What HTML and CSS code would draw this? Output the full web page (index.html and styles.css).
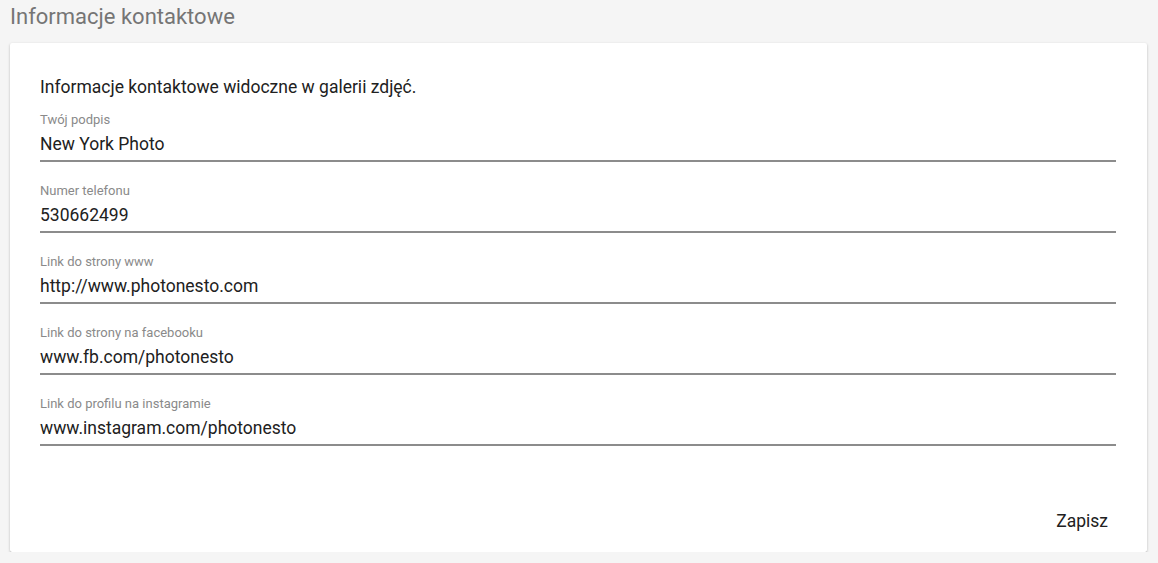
FILE: index.html
```html
<!DOCTYPE html>
<html lang="pl">
<head>
<meta charset="utf-8">
<title>Informacje kontaktowe</title>
<link rel="stylesheet" href="styles.css">
</head>
<body>
<h1 class="page-title">Informacje kontaktowe</h1>
<div class="card">
  <p class="card-desc">Informacje kontaktowe widoczne w galerii zdjęć.</p>
  <div class="field">
    <label class="field-label">Twój podpis</label>
    <div class="field-value">New York Photo</div>
  </div>
  <div class="field">
    <label class="field-label">Numer telefonu</label>
    <div class="field-value">530662499</div>
  </div>
  <div class="field">
    <label class="field-label">Link do strony www</label>
    <div class="field-value">http://www.photonesto.com</div>
  </div>
  <div class="field">
    <label class="field-label">Link do strony na facebooku</label>
    <div class="field-value">www.fb.com/photonesto</div>
  </div>
  <div class="field">
    <label class="field-label">Link do profilu na instagramie</label>
    <div class="field-value">www.instagram.com/photonesto</div>
  </div>
  <div class="card-actions">
    <button class="btn-flat">Zapisz</button>
  </div>
</div>
</body>
</html>
```
FILE: styles.css
```css
html, body {
  margin: 0;
  padding: 0;
}
body {
  background: #f5f5f5;
  font-family: Roboto, "Liberation Sans", sans-serif;
  color: #212121;
}
.page-title {
  margin: 0;
  padding: 0 10px;
  font-size: 22px;
  font-weight: 400;
  line-height: 34px;
  height: 43px;
  color: #757575;
}
.card {
  margin: 0 11px 0 10px;
  background: #fff;
  border-radius: 2px;
  box-shadow: 0 1px 3px rgba(0,0,0,.2), 0 1px 1px rgba(0,0,0,.14), 0 2px 1px -1px rgba(0,0,0,.12);
  padding: 34px 31px 13px 30px;
}
.card-desc {
  margin: 0;
  font-size: 17.5px;
  line-height: 20px;
  color: #212121;
}
.field {
  display: flex;
  flex-direction: column;
  border-bottom: 2px solid #8c8c8c;
  padding-bottom: 5px;
  margin-top: 15px;
}
.field + .field {
  margin-top: 21px;
}
.field-label {
  font-size: 13px;
  line-height: 15px;
  color: #8a8a8a;
  margin-bottom: 7px;
}
.field-value {
  font-size: 17.5px;
  line-height: 21px;
  color: #212121;
}
.card-actions {
  display: flex;
  justify-content: flex-end;
  margin-top: 57px;
}
.btn-flat {
  font-family: Roboto, "Liberation Sans", sans-serif;
  font-size: 17.5px;
  line-height: 36px;
  height: 36px;
  padding: 0 16px;
  margin-right: -8px;
  border: 0;
  background: transparent;
  color: #212121;
  cursor: pointer;
}
```
